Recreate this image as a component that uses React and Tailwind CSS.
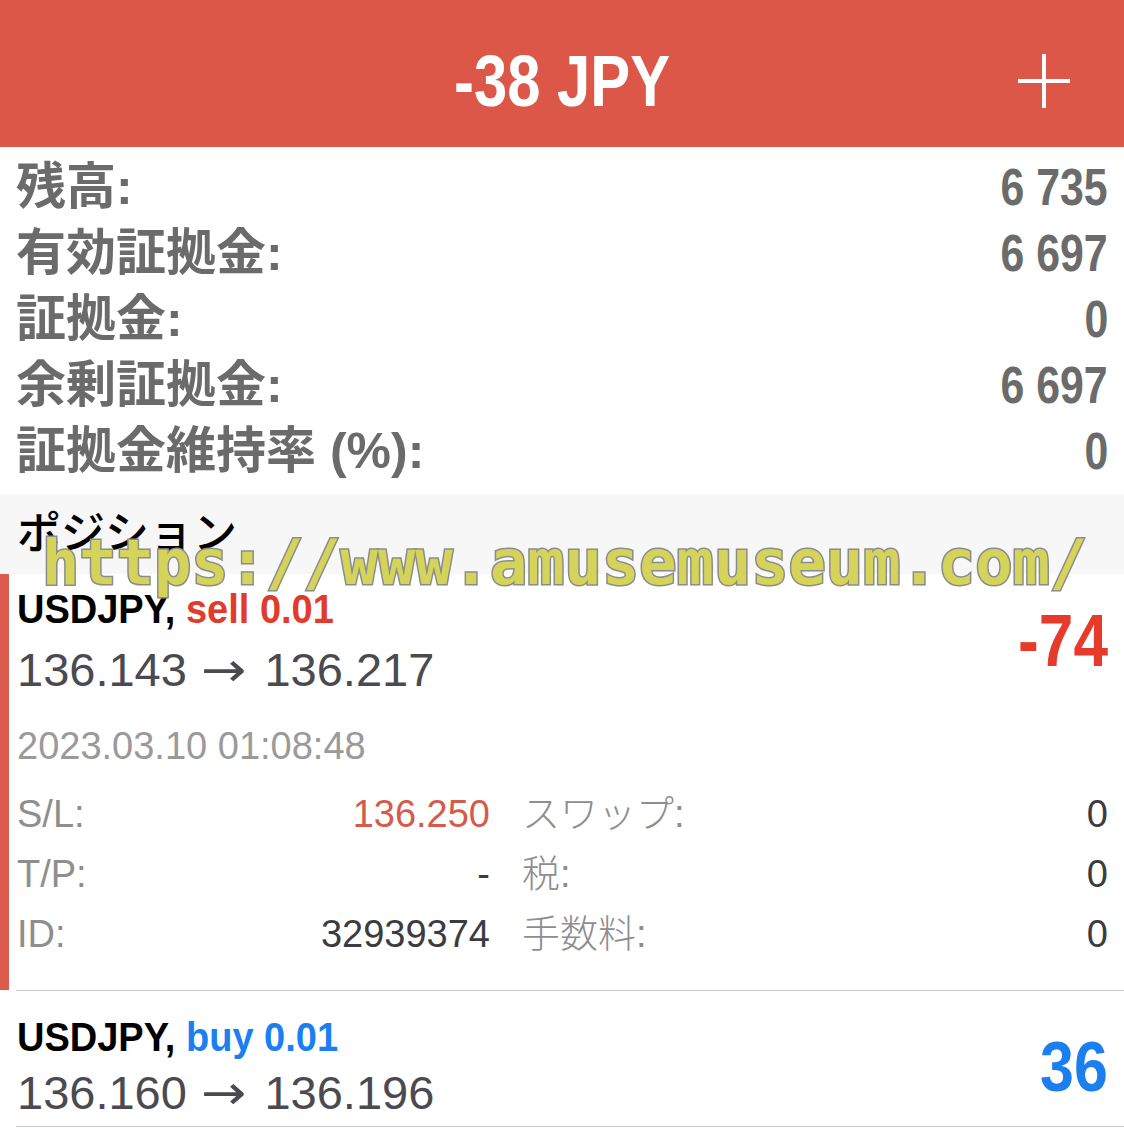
import React from "react";

const balances = [
  ["残高:", "6 735"],
  ["有効証拠金:", "6 697"],
  ["証拠金:", "0"],
  ["余剰証拠金:", "6 697"],
  ["証拠金維持率 (%):", "0"],
];

const details = [
  [["S/L:", "136.250", "text-[#d65a4c]"], ["スワップ:", "0", "text-[#3c3c40]"]],
  [["T/P:", "-", "text-[#3c3c40]"], ["税:", "0", "text-[#3c3c40]"]],
  [["ID:", "32939374", "text-[#3c3c40]"], ["手数料:", "0", "text-[#3c3c40]"]],
];

function Price({ from, to }) {
  return (
    <div className="h-[47px] text-[47px] leading-none text-[#4a4a50] whitespace-nowrap">
      {from}{" "}
      <span className="inline-block ml-[4px] mr-[8px] leading-none font-['DejaVu_Sans',sans-serif] scale-x-[1.15]">→</span>{" "}
      {to}
    </div>
  );
}

export default function App() {
  return (
    <div className="relative w-[1124px] h-[1138px] overflow-hidden bg-white font-['Liberation_Sans','Noto_Sans_CJK_JP',sans-serif]">
      <header className="h-[147px] bg-[#dc5748] grid grid-cols-[1fr_auto_1fr] items-center pt-[15px]">
        <div />
        <div className="text-white text-[72px] font-bold leading-none scale-x-[0.83]">-38 JPY</div>
        <div className="flex justify-end pr-[54px]">
          <svg width="52" height="54" viewBox="0 0 52 54">
            <path d="M26 0V54M0 27H52" stroke="white" strokeWidth="4" fill="none" />
          </svg>
        </div>
      </header>

      <section className="pt-[7px] pb-[10px]">
        {balances.map(([l, v]) => (
          <div key={l} className="h-[66px] flex items-center justify-between pl-[16px] pr-[16px] text-[#6b6b6b]">
            <span className="text-[50px] font-bold leading-none">{l}</span>
            <span className="text-[51px] font-bold leading-none scale-x-[0.84] origin-right">{v}</span>
          </div>
        ))}
      </section>

      <div className="h-[80px] bg-[#f7f7f7] flex items-center pl-[17px] text-[44px] font-medium leading-none text-black">
        ポジション
      </div>

      <div className="border-l-[9px] border-[#dd5b4d] pl-[8px] pr-[16px] pt-[15px] pb-[26px]">
        <div className="flex items-center justify-between">
          <div>
            <div className="text-[40px] font-bold leading-none scale-x-[0.95] origin-left text-black whitespace-nowrap">
              USDJPY, <span className="text-[#e23b2d]">sell 0.01</span>
            </div>
            <div className="mt-[17px]">
              <Price from="136.143" to="136.217" />
            </div>
          </div>
          <div className="text-[74px] font-bold leading-none text-[#e63a2a] scale-x-[0.84] origin-right">-74</div>
        </div>
        <div className="mt-[34px] text-[38px] leading-none text-[#9a9a9a]">2023.03.10 01:08:48</div>
        <div className="mt-[19px] grid grid-cols-[473px_586px] gap-x-[32px] text-[38px] leading-[60px]">
          {details.map((row, i) => (
            <React.Fragment key={i}>
              {row.map(([label, value, color]) => (
                <div key={label} className="flex justify-between">
                  <span className="text-[#8e8e8e] font-light">{label}</span>
                  <span className={color}>{value}</span>
                </div>
              ))}
            </React.Fragment>
          ))}
        </div>
      </div>
      <div className="ml-[16px] h-px bg-[#c8c8c8]" />

      <div className="pl-[17px] pr-[16px] pt-[26px] pb-[10px] flex items-center justify-between">
        <div>
          <div className="text-[40px] font-bold leading-none scale-x-[0.95] origin-left text-black whitespace-nowrap">
            USDJPY, <span className="text-[#1b7ff0]">buy 0.01</span>
          </div>
          <div className="mt-[12px]">
            <Price from="136.160" to="136.196" />
          </div>
        </div>
        <div className="text-[70px] font-bold leading-none text-[#1b7ff0] scale-x-[0.87] origin-right">36</div>
      </div>
      <div className="ml-[16px] h-px bg-[#c8c8c8]" />

      <div className="absolute left-[42px] top-[532px] pointer-events-none whitespace-nowrap text-[62px] font-bold leading-none font-['DejaVu_Sans_Mono',monospace] text-[#d4d45a] [-webkit-text-stroke:3px_#8c8c8c] [paint-order:stroke_fill]">
        https://www.amusemuseum.com/
      </div>
    </div>
  );
}
